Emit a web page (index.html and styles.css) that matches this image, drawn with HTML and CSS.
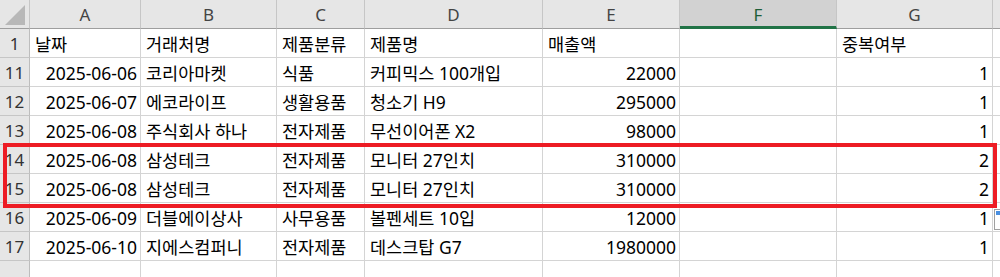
FILE: index.html
```html
<!DOCTYPE html>
<html lang="ko">
<head>
<meta charset="utf-8">
<link rel="stylesheet" href="styles.css">
</head>
<body>
<div class="sheet">
  <div class="grid">
    <div class="hd corner"><span class="tri"></span></div>
    <div class="hd col">A</div>
    <div class="hd col">B</div>
    <div class="hd col">C</div>
    <div class="hd col">D</div>
    <div class="hd col">E</div>
    <div class="hd col sel">F</div>
    <div class="hd col">G</div>
    <div class="hd col end"></div>

    <div class="rh">1</div>
    <div class="c">날짜</div><div class="c">거래처명</div><div class="c">제품분류</div><div class="c">제품명</div><div class="c">매출액</div><div class="c"></div><div class="c">중복여부</div><div class="c end"></div>

    <div class="rh">11</div>
    <div class="c r">2025-06-06</div><div class="c">코리아마켓</div><div class="c">식품</div><div class="c">커피믹스 100개입</div><div class="c r">22000</div><div class="c"></div><div class="c r">1</div><div class="c end"></div>

    <div class="rh">12</div>
    <div class="c r">2025-06-07</div><div class="c">에코라이프</div><div class="c">생활용품</div><div class="c">청소기 H9</div><div class="c r">295000</div><div class="c"></div><div class="c r">1</div><div class="c end"></div>

    <div class="rh">13</div>
    <div class="c r">2025-06-08</div><div class="c">주식회사 하나</div><div class="c">전자제품</div><div class="c">무선이어폰 X2</div><div class="c r">98000</div><div class="c"></div><div class="c r">1</div><div class="c end"></div>

    <div class="rh">14</div>
    <div class="c r">2025-06-08</div><div class="c">삼성테크</div><div class="c">전자제품</div><div class="c">모니터 27인치</div><div class="c r">310000</div><div class="c"></div><div class="c r">2</div><div class="c end"></div>

    <div class="rh">15</div>
    <div class="c r">2025-06-08</div><div class="c">삼성테크</div><div class="c">전자제품</div><div class="c">모니터 27인치</div><div class="c r">310000</div><div class="c"></div><div class="c r">2</div><div class="c end"></div>

    <div class="rh">16</div>
    <div class="c r">2025-06-09</div><div class="c">더블에이상사</div><div class="c">사무용품</div><div class="c">볼펜세트 10입</div><div class="c r">12000</div><div class="c"></div><div class="c r">1</div><div class="c end"></div>

    <div class="rh">17</div>
    <div class="c r">2025-06-10</div><div class="c">지에스컴퍼니</div><div class="c">전자제품</div><div class="c">데스크탑 G7</div><div class="c r">1980000</div><div class="c"></div><div class="c r">1</div><div class="c end"></div>

    <div class="rh last"></div>
    <div class="c last"></div><div class="c last"></div><div class="c last"></div><div class="c last"></div><div class="c last"></div><div class="c last"></div><div class="c last"></div><div class="c end last"></div>
  </div>
  <div class="highlight"></div>
  <div class="paste"><span class="paste-top"></span></div>
</div>
</body>
</html>
```

FILE: styles.css
```css
* { box-sizing: border-box; }
html, body { margin: 0; padding: 0; background: #fff; }
body { width: 1000px; height: 277px; overflow: hidden; }
.sheet { position: relative; width: 1000px; height: 277px; overflow: hidden;
  font-family: "Noto Sans", "Noto Sans CJK KR", sans-serif; font-size: 17.5px; color: #000; }
.grid {
  display: grid;
  grid-template-columns: 30px 111px 136px 88px 178px 137px 157px 156px 7px;
  grid-template-rows: 29px repeat(8, 29px) 20px;
}
.hd { background: #e6e6e6; border-right: 1px solid #c6c6c6; border-bottom: 1px solid #9e9e9e;
  display: flex; align-items: center; justify-content: center; color: #444; font-size: 17px; }
.corner { position: relative; border-right: 1px solid #c6c6c6; }
.tri { width: 0; height: 0; border-left: 20px solid transparent; border-bottom: 20px solid #b8b8b8;
  position: absolute; right: 4px; bottom: 3px; }
.hd.sel { background: #d2d2d2; color: #1e5e38; border-bottom: 3px solid #217346; padding-top: 2px; }
.hd.end { border-right: none; }
.rh { background: #e6e6e6; border-right: 1px solid #bdbdbd; border-bottom: 1px solid #c6c6c6;
  display: flex; align-items: center; justify-content: center; color: #333; font-size: 17px; padding-top: 1px; }
.c { border-right: 1px solid #d4d4d4; border-bottom: 1px solid #d4d4d4;
  display: flex; align-items: center; padding: 1px 4px 0 5px; white-space: nowrap; overflow: hidden; }
.c.r { justify-content: flex-end; padding-right: 3px; }
.c.end { border-right: none; }
.last { border-bottom: none; }
.highlight { position: absolute; left: 3px; top: 143px; width: 994px; height: 65px;
  border: 4px solid #ed1c24; }
.paste { position: absolute; left: 994px; top: 209px; width: 10px; height: 21px;
  border: 1px solid #a0a0a0; background: #fff; }
.paste-top { display: block; margin: 1px 0 0 1px; width: 6px; height: 4px; background: #4a8fe0; }
```
